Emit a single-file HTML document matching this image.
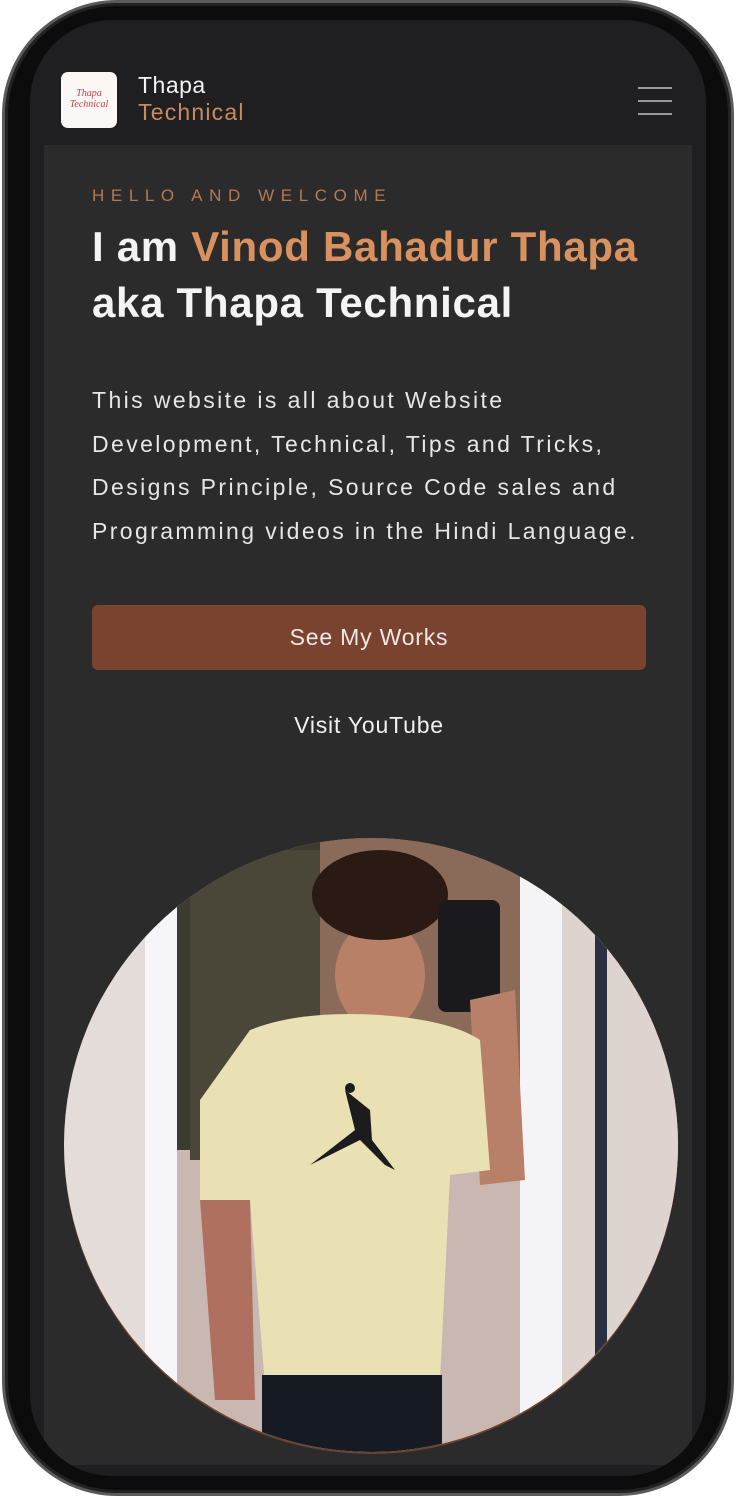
<!DOCTYPE html>
<html><head><meta charset="utf-8"><style>
*{margin:0;padding:0;box-sizing:border-box}
body{width:736px;height:1496px;background:#fff;position:relative;overflow:hidden;font-family:"Liberation Sans",sans-serif}
.phone{position:absolute;left:2px;top:0;width:732px;height:1496px;border-radius:115px;background:#0c0c0c;border:3px solid #5a5a5a;box-shadow:inset 0 0 0 3px #222}
.screen{position:absolute;left:30px;top:20px;width:676px;height:1456px;border-radius:82px;background:#1f1f21;overflow:hidden}
.content{position:absolute;left:14px;top:125px;width:648px;height:1320px;background:#2b2b2b}
.t{position:absolute;white-space:nowrap}
</style></head><body>
<div class="phone"></div>
<div class="screen">
  <div class="content"></div>
</div>
<div class="t" style="left:61px;top:72px;width:56px;height:56px;background:#fbf7f5;border-radius:7px"></div>
<div class="t" style="left:68px;top:88px;font:italic 10px 'Liberation Serif',serif;color:#c7434a;line-height:11px;text-align:center;width:42px">Thapa<br>Technical</div>
<div class="t" style="left:138px;top:72px;font-size:23px;letter-spacing:0.5px;color:#f2f2f2">Thapa</div>
<div class="t" style="left:138px;top:99px;font-size:23px;letter-spacing:1.2px;color:#c98a5e">Technical</div>
<div class="t" style="left:638px;top:87px;width:34px;height:2px;background:#9a9a9a"></div>
<div class="t" style="left:638px;top:100px;width:34px;height:2px;background:#9a9a9a"></div>
<div class="t" style="left:638px;top:113px;width:34px;height:2px;background:#9a9a9a"></div>

<div class="t" style="left:92px;top:186px;font-size:17px;letter-spacing:6.6px;color:#b57a52">HELLO AND WELCOME</div>
<div class="t" style="left:92px;top:223px;font-size:42px;font-weight:bold;letter-spacing:0.7px;color:#f4f4f4">I am <span style="color:#d9925f">Vinod Bahadur Thapa</span></div>
<div class="t" style="left:92px;top:279px;font-size:42px;font-weight:bold;letter-spacing:0.7px;color:#f4f4f4">aka Thapa Technical</div>
<div class="t" style="left:92px;top:379px;font-size:23px;line-height:43.7px;letter-spacing:2.4px;color:#e6e6e6">This website is all about Website<br>Development, Technical, Tips and Tricks,<br>Designs Principle, Source Code sales and<br>Programming videos in the Hindi Language.</div>
<div class="t" style="left:92px;top:605px;width:554px;height:65px;background:#7a4330;border-radius:6px;color:#f0e8e4;font-size:23px;letter-spacing:0.8px;text-align:center;line-height:65px">See My Works</div>
<div class="t" style="left:92px;top:712px;width:554px;text-align:center;color:#f0f0f0;font-size:23px;letter-spacing:0.8px">Visit YouTube</div>

<svg class="t" style="left:0;top:0" width="736" height="1496">
<defs><clipPath id="c"><circle cx="371" cy="1145" r="307"/></clipPath></defs>
<circle cx="371" cy="1147" r="307" fill="#6b4430"/>
<g clip-path="url(#c)">
<rect x="0" y="800" width="736" height="700" fill="#e4dcd8"/>
<rect x="560" y="800" width="130" height="700" fill="#ddd3cf"/>
<rect x="145" y="820" width="32" height="680" fill="#f6f6f8"/>
<rect x="520" y="820" width="42" height="680" fill="#f4f4f6"/>
<rect x="595" y="880" width="12" height="600" fill="#2a3040"/>
<rect x="177" y="830" width="343" height="330" fill="#3d3a30"/>
<rect x="320" y="830" width="200" height="330" fill="#8a6a58"/>
<rect x="177" y="1150" width="343" height="350" fill="#c9b8b2"/>
<rect x="190" y="850" width="130" height="310" fill="#4a4638"/>
<ellipse cx="380" cy="975" rx="45" ry="55" fill="#b98068"/>
<ellipse cx="380" cy="895" rx="68" ry="45" fill="#2b1a14"/>
<rect x="438" y="900" width="62" height="112" rx="8" fill="#1a1a1e"/>
<path d="M470 1000 L515 990 L525 1180 L480 1185 Z" fill="#b88068"/>
<path d="M250 1030 Q300 1010 380 1015 Q450 1020 480 1040 L490 1170 L450 1175 L440 1380 L265 1385 L250 1200 L200 1200 L200 1100 Z" fill="#e9e1b4"/>
<path d="M345 1090 L355 1130 L310 1165 L340 1150 L360 1140 L385 1165 L395 1170 L372 1140 L370 1110 Z" fill="#1c1c1c"/>
<circle cx="350" cy="1088" r="5" fill="#1c1c1c"/>
<path d="M200 1200 L250 1200 L255 1400 L215 1400 Z" fill="#b07060"/>
<rect x="262" y="1375" width="180" height="100" fill="#161a22"/>
</g>
</svg>
</body></html>
